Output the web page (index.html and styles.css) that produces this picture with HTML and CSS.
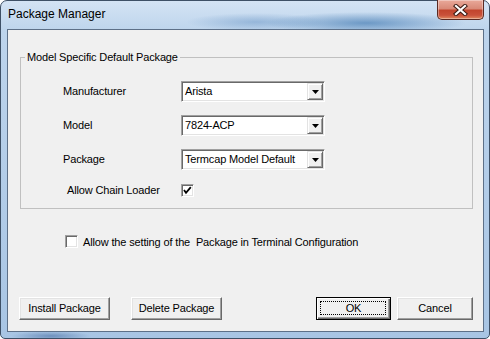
FILE: index.html
```html
<!DOCTYPE html>
<html lang="en">
<head>
    <meta charset="UTF-8">
    <title>Package Manager</title>
    <link rel="stylesheet" href="styles.css">
</head>
<body>

<div class="window">
    <div class="titlebar">
        <span class="title">Package Manager</span>
        <div class="close-btn">
            <svg width="15" height="12" viewBox="0 0 15 12">
                <path d="M3 2 L12 10 M12 2 L3 10" stroke="#3b1a12" stroke-width="4.2" stroke-linecap="square"/>
                <path d="M3 2 L12 10 M12 2 L3 10" stroke="#fff" stroke-width="2.2" stroke-linecap="square"/>
            </svg>
        </div>
    </div>

    <div class="client">
        <div class="group">
            <span class="group-title">Model Specific Default Package</span>
            <div class="group-grid">
                <span class="field-label">Manufacturer</span>
                <div class="combo">
                    <span class="combo-text">Arista</span>
                    <span class="combo-arrow"><svg width="7" height="4" viewBox="0 0 7 4"><polygon points="0,0 7,0 3.5,4" fill="#000"/></svg></span>
                </div>

                <span class="field-label">Model</span>
                <div class="combo">
                    <span class="combo-text">7824-ACP</span>
                    <span class="combo-arrow"><svg width="7" height="4" viewBox="0 0 7 4"><polygon points="0,0 7,0 3.5,4" fill="#000"/></svg></span>
                </div>

                <span class="field-label">Package</span>
                <div class="combo">
                    <span class="combo-text">Termcap Model Default</span>
                    <span class="combo-arrow"><svg width="7" height="4" viewBox="0 0 7 4"><polygon points="0,0 7,0 3.5,4" fill="#000"/></svg></span>
                </div>

                <span class="field-label chain-label">Allow Chain Loader</span>
                <span class="check">
                    <svg width="9" height="9" viewBox="0 0 9 9"><polyline points="1,4 3,6.8 7.8,1.2" fill="none" stroke="#000" stroke-width="1.8"/></svg>
                </span>
            </div>
        </div>

        <div class="terminal-row">
            <span class="check"></span>
            <span>Allow the setting of the&nbsp; Package in Terminal Configuration</span>
        </div>

        <div class="buttons">
            <div class="btn-group">
                <div class="btn btn-wide">Install Package</div>
                <div class="btn btn-wide">Delete Package</div>
            </div>
            <div class="btn-group right">
                <div class="btn btn-ok default">OK</div>
                <div class="btn btn-cancel">Cancel</div>
            </div>
        </div>
    </div>
</div>

</body>
</html>
```

FILE: styles.css
```css
/* Windows 7 style dialog */
body {
    margin: 0;
    font-family: "Liberation Sans", Arial, sans-serif;
    font-size: 11px;
    letter-spacing: -0.15px;
    color: #000;
    background: #fff;
}
.window {
    width: 490px;
    height: 339px;
    box-sizing: border-box;
    border: 1px solid #3e5066;
    border-radius: 7px 7px 5px 5px;
    padding: 0 5px 6px 6px;
    display: flex;
    flex-direction: column;
    background:
        radial-gradient(ellipse 100px 11px at 365px 22px, rgba(50, 110, 170, 0.6), rgba(50, 110, 170, 0)),
        radial-gradient(ellipse 70px 9px at 255px 21px, rgba(80, 130, 185, 0.4), rgba(80, 130, 185, 0)),
        radial-gradient(ellipse 40px 5px at 50px 335px, rgba(40, 80, 140, 0.45), rgba(40, 80, 140, 0)),
        linear-gradient(to bottom, #d4e3f4 0px, #bdd4ec 30px, #a8c5e4 100%);
}
.titlebar {
    height: 28px;
    display: flex;
    justify-content: space-between;
    align-items: flex-start;
}
.title {
    font-size: 12px;
    line-height: 14px;
    letter-spacing: 0;
    margin-top: 6px;
    margin-left: 1px;
}
.close-btn {
    width: 47px;
    height: 20px;
    box-sizing: border-box;
    margin-top: -1px;
    border: 1px solid #5a2a22;
    border-top: none;
    border-radius: 0 0 5px 5px;
    display: flex;
    align-items: center;
    justify-content: center;
    background: linear-gradient(to bottom, #e9a99a 0%, #d98a78 45%, #c2452d 55%, #c9513a 80%, #e08a60 100%);
    box-shadow: inset 0 0 0 1px rgba(255, 255, 255, 0.35);
}
.client {
    flex: 1;
    background: #f0f0f0;
    border: 1px solid #5d7088;
    display: flex;
    flex-direction: column;
}
.group {
    position: relative;
    height: 152px;
    box-sizing: border-box;
    margin: 27px 10px 0 12px;
    border: 1px solid #c0c0c0;
}
.group-title {
    position: absolute;
    top: -7px;
    left: 4px;
    padding: 0 2px;
    line-height: 13px;
    background: #f0f0f0;
}
.group-grid {
    display: grid;
    grid-template-columns: 118px 144px;
    grid-template-rows: 21px 21px 21px 13px;
    row-gap: 13px;
    padding: 23px 0 0 42px;
}
.field-label {
    align-self: center;
    margin-top: -1px;
}
.chain-label {
    padding-left: 4px;
    margin-top: 0;
}
.combo {
    display: flex;
    box-sizing: border-box;
    height: 21px;
    padding: 1px;
    background: #fff;
    border: 1px solid;
    border-color: #a0a0a0 #fff #fff #a0a0a0;
    box-shadow: inset 1px 1px #696969, inset -1px -1px #e3e3e3;
}
.combo-text {
    flex: 1;
    padding-left: 2px;
    line-height: 16px;
}
.combo-arrow {
    width: 16px;
    box-sizing: border-box;
    display: flex;
    align-items: center;
    justify-content: center;
    background: #f0f0f0;
    border: 1px solid;
    border-color: #e3e3e3 #696969 #696969 #e3e3e3;
    box-shadow: inset 1px 1px #fff, inset -1px -1px #a0a0a0;
}
.check {
    width: 13px;
    height: 13px;
    box-sizing: border-box;
    margin-top: 1px;
    display: flex;
    align-items: center;
    justify-content: center;
    background: #fff;
    border: 1px solid;
    border-color: #a0a0a0 #fff #fff #a0a0a0;
    box-shadow: inset 1px 1px #696969, inset -1px -1px #e3e3e3;
}
.terminal-row {
    display: flex;
    align-items: center;
    gap: 5px;
    margin: 26px 0 0 57px;
}
.terminal-row .check {
    margin-top: 0;
}
.buttons {
    margin-top: auto;
    display: flex;
    justify-content: space-between;
    padding: 0 10px 11px 11px;
}
.btn-group {
    display: flex;
    gap: 21px;
}
.btn-group.right {
    gap: 6px;
}
.btn {
    position: relative;
    height: 23px;
    box-sizing: border-box;
    display: flex;
    align-items: center;
    justify-content: center;
    padding-bottom: 1px;
    background: #f0f0f0;
    border: 1px solid;
    border-color: #fff #696969 #696969 #fff;
    box-shadow: inset -1px -1px #a0a0a0, inset 1px 1px #e3e3e3;
}
.btn-wide {
    width: 91px;
}
.btn-ok {
    width: 75px;
}
.btn-cancel {
    width: 76px;
}
.btn.default {
    border: 1px solid #000;
    box-shadow: inset 1px 1px #fff, inset -1px -1px #696969, inset -2px -2px #a0a0a0;
}
.btn.default::after {
    content: "";
    position: absolute;
    top: 3px;
    left: 3px;
    right: 4px;
    bottom: 4px;
    border: 1px dotted #000;
}
```
